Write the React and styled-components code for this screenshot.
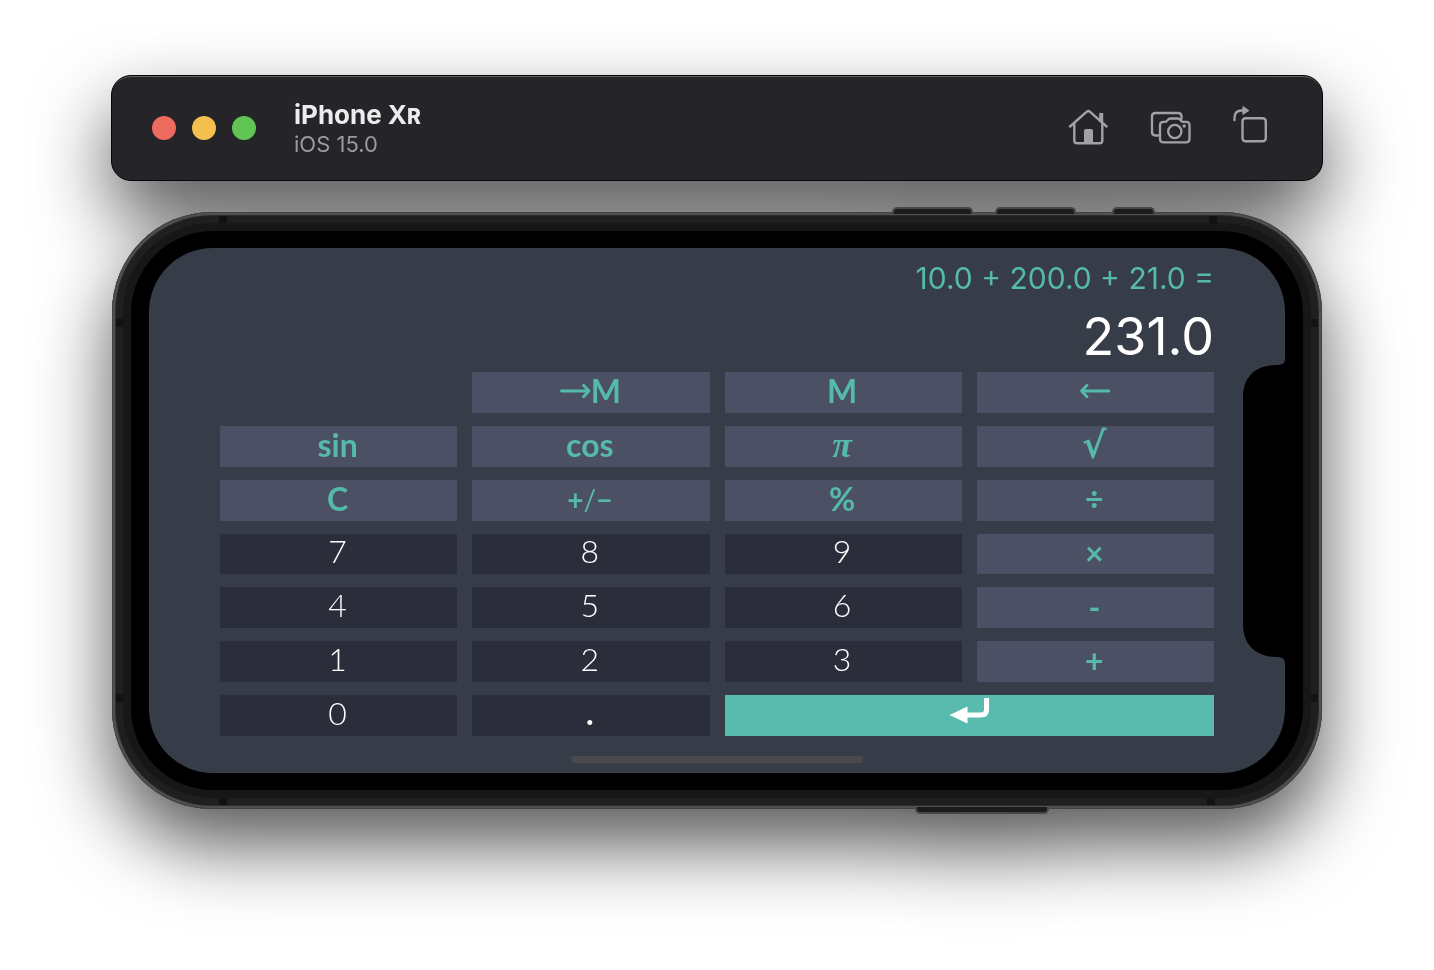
import React from "react";
import styled, { createGlobalStyle, css } from "styled-components";

const GlobalStyle = createGlobalStyle`
  *, *::before, *::after { box-sizing: border-box; }
  body {
    margin: 0;
    background: #fff;
    font-family: Inter, "Liberation Sans", sans-serif;
  }
`;

const Page = styled.main`
  padding: 75px 111px 160px;
  overflow: hidden;
`;

const Simulator = styled.div`
  display: flex;
  flex-direction: column;
  gap: 31px;
  filter: drop-shadow(0 36px 38px rgba(0, 0, 0, 0.66));
`;

const TitleBar = styled.header`
  display: flex;
  align-items: center;
  height: 106px;
  padding: 0 48px 0 40px;
  border: 1px solid #050506;
  border-radius: 20px;
  background: #252429;
  box-shadow: inset 0 2px 0 -1px #636365;
`;

const Lights = styled.div`
  display: flex;
  gap: 16px;
`;

const Light = styled.button`
  width: 24px;
  height: 24px;
  padding: 0;
  border: 0;
  border-radius: 50%;
  background: ${(p) => p.$color};
`;

const Titles = styled.div`
  flex: 1;
  margin-left: 38px;
  padding-top: 4px;
`;

const DeviceName = styled.h1`
  margin: 0;
  font-size: 26px;
  line-height: 26px;
  font-weight: 700;
  color: #ececec;
`;

const SmallCap = styled.span`
  font-size: 21px;
  font-weight: 800;
`;

const OsVersion = styled.p`
  margin: 0;
  font-size: 22px;
  line-height: 28px;
  color: #9c9a9f;
`;

const Tools = styled.div`
  display: flex;
  gap: 40px;
`;

const Tool = styled.button`
  display: block;
  width: 42px;
  height: 44px;
  padding: 0;
  border: 0;
  background: none;
  color: #a3a1a6;

  svg { display: block; }
`;

const Phone = styled.section`
  position: relative;
  margin: 0 1px;
  padding: 4px;
  border-radius: 100px;
  background: #2c2c2c;
  box-shadow: inset 0 0 0 1px #434343, inset 0 0 0 3px #505050;
`;

const Band = styled.div`
  padding: 7px;
  border-radius: 96px;
  background: #1f1f1f;
`;

const InnerBand = styled.div`
  padding: 8px;
  border-radius: 89px;
  background: #171717;
`;

const Bezel = styled.div`
  padding: 17px 18px;
  border-radius: 82px;
  background: #000;
`;

const SideButton = styled.span`
  position: absolute;
  right: ${(p) => p.$right}px;
  width: ${(p) => p.$width}px;
  height: 7px;
  background: #1b1b1b;
  border: 2px solid #474747;
  ${(p) =>
    p.$edge === "top"
      ? css`
          top: -5px;
          border-bottom: 0;
          border-radius: 5px 5px 0 0;
        `
      : css`
          bottom: -5px;
          border-top: 0;
          border-radius: 0 0 5px 5px;
        `}
`;

const Antenna = styled.span`
  position: absolute;
  background: #121212;
  ${(p) =>
    p.$edge === "top" || p.$edge === "bottom"
      ? css`width: 8px; height: 7px; ${p.$edge}: 4px;`
      : css`width: 7px; height: 8px; ${p.$edge}: 4px;`}
  ${(p) => p.$from}: ${(p) => p.$at}px;
`;

const Screen = styled.div`
  position: relative;
  display: flex;
  flex-direction: column;
  height: 525px;
  padding: 10px 71px 37px;
  border-radius: 64px;
  background: #363c48;
  overflow: hidden;
`;

const Notch = styled.svg`
  position: absolute;
  right: 0;
  top: 50%;
  margin-top: -153px;
`;

const HomeIndicator = styled.span`
  position: absolute;
  left: 50%;
  bottom: 10px;
  width: 292px;
  height: 7px;
  margin-left: -146px;
  border-radius: 4px;
  background: #4a4a4a;
`;

const Expression = styled.output`
  font-size: 30px;
  line-height: 40px;
  text-align: right;
  color: #55b9ac;
`;

const Result = styled.output`
  flex: 1;
  padding-top: 4px;
  font-size: 52px;
  line-height: 70px;
  text-align: right;
  color: #fff;
`;

const Keypad = styled.div`
  display: grid;
  grid-template-columns: repeat(4, 1fr);
  grid-template-rows: repeat(7, 1fr);
  gap: 13px 15px;
  height: 364px;
`;

const Key = styled.button`
  display: flex;
  align-items: center;
  justify-content: center;
  min-height: 0;
  padding: 0 2px 2px 0;
  border: 0;
  font-family: Lato, "Liberation Sans", sans-serif;
  font-size: 32px;
  line-height: 36px;
  ${(p) => p.$start && css`grid-column-start: 2;`}
  ${(p) =>
    p.$kind === "digit"
      ? css`background: #2b2d3b; color: #fff; font-weight: 300; padding-bottom: 6px;`
      : css`background: #4c5064; color: #55b9ac; font-weight: 700;`}
`;

const EnterKey = styled(Key)`
  grid-column: span 2;
  padding: 0 0 8px;
  background: #58bbae;
  color: #fff;
`;

const KeyLabel = styled.span`
  display: flex;
  align-items: center;
`;

const Pi = styled.span`
  font-family: "Liberation Serif", serif;
  font-style: italic;
  font-size: 36px;
`;

const Root = styled.span`
  font-family: "DejaVu Sans", sans-serif;
  font-size: 36px;
  font-weight: 400;
  -webkit-text-stroke: 1px currentColor;
`;

const Sign = styled.span`
  font-size: 28px;
`;

const Thin = styled.span`
  font-weight: 400;
`;

const Point = styled.span`
  font-weight: 700;
`;

const HomeIcon = () => (
  <svg width="42" height="44" viewBox="0 0 42 44" fill="none" stroke="currentColor" strokeWidth="2.4" strokeLinecap="round" strokeLinejoin="round" aria-hidden="true">
    <path d="M2 20.500 L18.800 5.700 Q20.300 4.500 21.800 5.700 L38.600 20.500" />
    <path d="M6.300 18 V34.500 Q6.300 37.300 9.100 37.300 H31.500 Q34.300 37.300 34.300 34.500 V18" />
    <path d="M33.200 7 V16" strokeWidth="4" strokeLinecap="butt" />
    <path d="M16 38 V25 Q16 23 18 23 H23 Q25 23 25 25 V38 Z" fill="currentColor" stroke="none" />
  </svg>
);

const CameraIcon = () => (
  <svg width="42" height="44" viewBox="0 0 42 44" fill="none" stroke="currentColor" strokeWidth="2.3" strokeLinecap="round" strokeLinejoin="round" aria-hidden="true">
    <path d="M8 29.500 H5.500 Q2 29.500 2 26 V10.500 Q2 7 5.500 7 H28 Q31.500 7 31.500 10.500 V13" />
    <path d="M13.500 15.800 H15 Q16.500 15.800 17.500 14.400 Q18.800 12.500 20.500 12.500 H28 Q29.700 12.500 30.700 14.400 Q31.500 15.800 33 15.800 H36.500 Q39.500 15.800 39.500 19.300 V32.500 Q39.500 36.300 36 36.300 H13.500 Q10 36.300 10 32.500 V19.300 Q10 15.800 13.500 15.800 Z" />
    <circle cx="24.800" cy="25.500" r="6.600" />
    <circle cx="34.200" cy="20" r="1.700" fill="currentColor" stroke="none" />
  </svg>
);

const RotateIcon = () => (
  <svg width="42" height="44" viewBox="0 0 42 44" fill="none" stroke="currentColor" strokeWidth="2.4" strokeLinecap="round" strokeLinejoin="round" aria-hidden="true">
    <rect x="10.500" y="12.200" width="23.300" height="23" rx="3" />
    <path d="M2.500 14 V12 Q2.500 4.500 9.500 4.500 H11" />
    <path d="M11 0.800 L16.500 4.500 L11 8.200 Z" fill="currentColor" strokeWidth="1.200" />
  </svg>
);

const ArrowIcon = ({ left }) => (
  <svg width="32" height="18" viewBox="0 0 32 18" fill="none" stroke="currentColor" strokeWidth="2.8" strokeLinecap="round" strokeLinejoin="round" aria-hidden="true">
    {left ? (
      <path d="M31 9 H3.500 M9 3.200 L3.500 9 L9 14.800" />
    ) : (
      <path d="M2.500 9 H30 M24.500 3.200 L30 9 L24.500 14.800" />
    )}
  </svg>
);

const ReturnIcon = () => (
  <svg width="42" height="30" viewBox="0 0 42 30" aria-hidden="true">
    <path d="M38.500 1 V12.500 Q38.500 18 33 18 H17" fill="none" stroke="currentColor" strokeWidth="5" />
    <path d="M1.500 18 L19.500 9.500 V26.500 Z" fill="currentColor" />
  </svg>
);

const keys = [
  { id: "store", name: "Store in memory", label: <><ArrowIcon />M</>, start: true },
  { id: "recall", label: "M" },
  { id: "back", name: "Backspace", label: <ArrowIcon left /> },
  { id: "sin", label: "sin" },
  { id: "cos", label: "cos" },
  { id: "pi", label: <Pi>π</Pi> },
  { id: "sqrt", label: <Root>√</Root> },
  { id: "clear", label: "C" },
  { id: "sign", label: <Sign>+<Thin>/</Thin>−</Sign> },
  { id: "percent", label: "%" },
  { id: "divide", label: "÷" },
  { id: "7", label: "7", digit: true },
  { id: "8", label: "8", digit: true },
  { id: "9", label: "9", digit: true },
  { id: "multiply", label: "×" },
  { id: "4", label: "4", digit: true },
  { id: "5", label: "5", digit: true },
  { id: "6", label: "6", digit: true },
  { id: "minus", label: "-" },
  { id: "1", label: "1", digit: true },
  { id: "2", label: "2", digit: true },
  { id: "3", label: "3", digit: true },
  { id: "plus", label: "+" },
  { id: "0", label: "0", digit: true },
  { id: "point", label: <Point>.</Point>, digit: true },
];

export default function App() {
  return (
    <>
      <GlobalStyle />
      <Page>
        <Simulator>
          <TitleBar>
            <Lights>
              <Light $color="#ed6a5e" aria-label="Close" />
              <Light $color="#f5bf4f" aria-label="Minimize" />
              <Light $color="#61c554" aria-label="Zoom" />
            </Lights>
            <Titles>
              <DeviceName>iPhone X<SmallCap>R</SmallCap></DeviceName>
              <OsVersion>iOS 15.0</OsVersion>
            </Titles>
            <Tools>
              <Tool aria-label="Home"><HomeIcon /></Tool>
              <Tool aria-label="Screenshot"><CameraIcon /></Tool>
              <Tool aria-label="Rotate"><RotateIcon /></Tool>
            </Tools>
          </TitleBar>
          <Phone>
            <SideButton $edge="top" $right={349} $width={81} />
            <SideButton $edge="top" $right={246} $width={81} />
            <SideButton $edge="top" $right={167} $width={43} />
            <SideButton $edge="bottom" $right={273} $width={134} />
            <Band>
              <InnerBand>
                <Bezel>
                  <Screen>
                    <Expression>10.0 + 200.0 + 21.0 =</Expression>
                    <Result>231.0</Result>
                    <Keypad>
                      {keys.map((k) => (
                        <Key
                          key={k.id}
                          $kind={k.digit ? "digit" : "function"}
                          $start={k.start}
                          aria-label={k.name}
                        >
                          <KeyLabel>{k.label}</KeyLabel>
                        </Key>
                      ))}
                      <EnterKey aria-label="Enter"><ReturnIcon /></EnterKey>
                    </Keypad>
                    <Notch width="42" height="306" viewBox="0 0 42 306" aria-hidden="true">
                      <path d="M42 0 C42 5 40 7 34 7 C13 7 0 18 0 40 V266 C0 287 13 299 34 299 C40 299 42 301 42 306 Z" fill="#000" />
                    </Notch>
                    <HomeIndicator />
                  </Screen>
                </Bezel>
              </InnerBand>
            </Band>
            <Antenna $edge="top" $from="left" $at={107} />
            <Antenna $edge="top" $from="right" $at={105} />
            <Antenna $edge="bottom" $from="left" $at={107} />
            <Antenna $edge="bottom" $from="right" $at={107} />
            <Antenna $edge="left" $from="top" $at={107} />
            <Antenna $edge="right" $from="top" $at={107} />
            <Antenna $edge="left" $from="bottom" $at={107} />
            <Antenna $edge="right" $from="bottom" $at={107} />
          </Phone>
        </Simulator>
      </Page>
    </>
  );
}
